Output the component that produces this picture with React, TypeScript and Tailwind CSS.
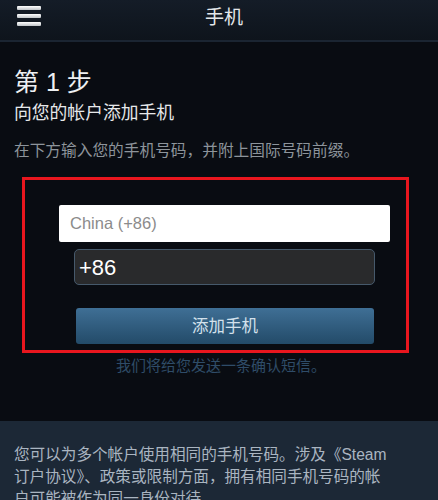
import React from 'react';

const cjk = '"Liberation Sans", "Noto Sans CJK SC", sans-serif';

function Header() {
  return (
    <div className="relative h-[42px] bg-gradient-to-b from-[#141c27] to-[#0e141c] border-b-2 border-[#1b2532] flex items-center justify-center">
      <div className="absolute left-[17px] top-[6px] flex flex-col gap-[4px]">
        <span className="block w-[24px] h-[4px] rounded-[1px] bg-gradient-to-b from-white to-[#bfc3c7]" />
        <span className="block w-[24px] h-[4px] rounded-[1px] bg-gradient-to-b from-white to-[#bfc3c7]" />
        <span className="block w-[24px] h-[4px] rounded-[1px] bg-gradient-to-b from-white to-[#bfc3c7]" />
      </div>
      <span className="text-[19px] text-[#e4e7ea] ml-[10px] -mt-[3px]">手机</span>
    </div>
  );
}

export default function App() {
  return (
    <div className="w-[438px] h-[500px] overflow-hidden bg-[#090c12]" style={{ fontFamily: cjk }}>
      <Header />
      <div className="px-[14px] pt-[25px]">
        <div className="text-[25px] leading-[30px] text-[#eef0f2]">第 1 步</div>
        <div className="text-[17.8px] leading-[22px] mt-[5px] text-[#e6e8ea]">向您的帐户添加手机</div>
        <div className="text-[15.7px] leading-[20px] mt-[17px] text-[#8d949b]">在下方输入您的手机号码，并附上国际号码前缀。</div>
      </div>
      <div className="ml-[22px] mt-[16px] w-[387px] h-[176px] border-[3px] border-[#e8161e] flex flex-col">
        <div className="ml-[34px] mt-[25px] w-[331px] h-[37px] bg-white rounded-[2px] flex items-center px-[11px]">
          <span className="text-[16.5px] text-[#8b8b8b]">China (+86)</span>
        </div>
        <div className="ml-[49px] mt-[7px] w-[301px] h-[36px] bg-[#292a2c] border border-[#46596b] rounded-[5px] flex items-center px-[4px]">
          <span className="text-[22px] text-white">+86</span>
        </div>
        <div className="ml-[51px] mt-[23px] w-[298px] h-[36px] rounded-[3px] bg-gradient-to-b from-[#3f6f95] to-[#234b69] flex items-center justify-center">
          <span className="text-[16.5px] text-[#d3e1ec]">添加手机</span>
        </div>
      </div>
      <div className="text-center text-[15px] leading-[20px] mt-[3px] text-[#2f4c68] pl-[4px]">我们将给您发送一条确认短信。</div>
      <div className="mt-[45px] h-[200px] bg-[#1c2836] px-[14px] pt-[23px]">
        <div className="w-[376px] text-[15.6px] leading-[22px] text-[#aab5c1]">
          您可以为多个帐户使用相同的手机号码。涉及《Steam 订户协议》、政策或限制方面，拥有相同手机号码的帐户可能被作为同一身份对待。
        </div>
      </div>
    </div>
  );
}
